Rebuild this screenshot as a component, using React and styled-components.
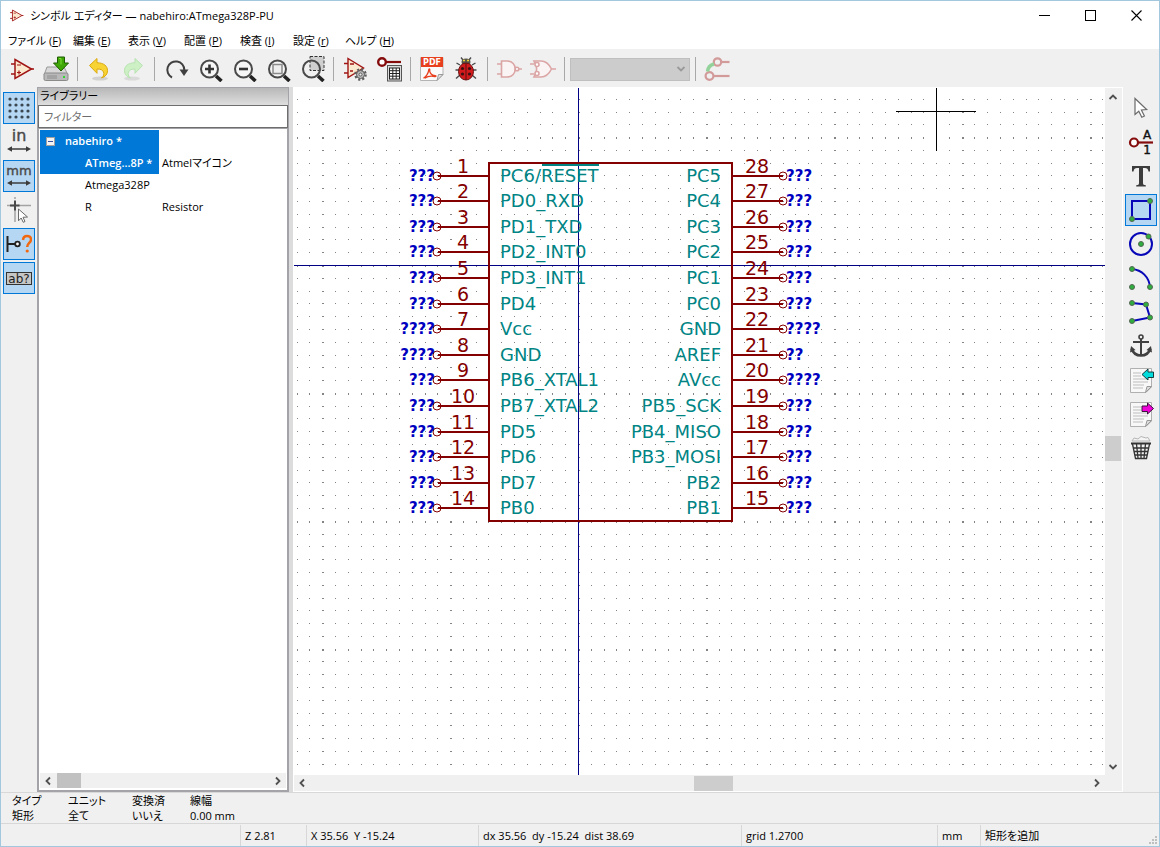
import React, { useState } from "react";
import styled, { createGlobalStyle, css } from "styled-components";

const MENUS = [
  ["ファイル", "F"],
  ["編集", "E"],
  ["表示", "V"],
  ["配置", "P"],
  ["検査", "I"],
  ["設定", "r"],
  ["ヘルプ", "H"],
];

const LEFT_PINS = [
  ["1", "PC6/RESET", "???"],
  ["2", "PD0_RXD", "???"],
  ["3", "PD1_TXD", "???"],
  ["4", "PD2_INT0", "???"],
  ["5", "PD3_INT1", "???"],
  ["6", "PD4", "???"],
  ["7", "Vcc", "????"],
  ["8", "GND", "????"],
  ["9", "PB6_XTAL1", "???"],
  ["10", "PB7_XTAL2", "???"],
  ["11", "PD5", "???"],
  ["12", "PD6", "???"],
  ["13", "PD7", "???"],
  ["14", "PB0", "???"],
];

const RIGHT_PINS = [
  ["28", "PC5", "???"],
  ["27", "PC4", "???"],
  ["26", "PC3", "???"],
  ["25", "PC2", "???"],
  ["24", "PC1", "???"],
  ["23", "PC0", "???"],
  ["22", "GND", "????"],
  ["21", "AREF", "??"],
  ["20", "AVcc", "????"],
  ["19", "PB5_SCK", "???"],
  ["18", "PB4_MISO", "???"],
  ["17", "PB3_MOSI", "???"],
  ["16", "PB2", "???"],
  ["15", "PB1", "???"],
];

const MESSAGES = [
  ["タイプ", "矩形"],
  ["ユニット", "全て"],
  ["変換済", "いいえ"],
  ["線幅", "0.00 mm"],
];

const STATUS = [
  "",
  "Z 2.81",
  "X 35.56  Y -15.24",
  "dx 35.56  dy -15.24  dist 38.69",
  "grid 1.2700",
  "mm",
  "矩形を追加",
];

/* ---------- icons ---------- */

const Icon = ({ children, size = 26 }) => (
  <svg width={size} height={size} viewBox="0 0 26 26" fill="none" aria-hidden="true">
    {children}
  </svg>
);

const OpAmp = ({ size }) => (
  <Icon size={size}>
    <path d="M2 8h4M2 18h4M22 13h3" stroke="#a01414" strokeWidth="1.6" />
    <path d="M6 3.500 22.500 13 6 22.500z" fill="#fbe9cf" stroke="#a01414" strokeWidth="1.5" />
    <path d="M8 9h4M8 16.500h4M10 14.500v4" stroke="#a01414" strokeWidth="1.200" />
  </Icon>
);

const SaveLibrary = () => (
  <Icon>
    <path d="M4 11h17l4 8H1z" fill="#d8d8d8" stroke="#9a9a9a" />
    <rect x="1" y="17" width="24" height="7.500" rx="1.500" fill="#b9b9b9" stroke="#8a8a8a" />
    <path d="M4 20h10M4 22h10" stroke="#8e8e8e" />
    <rect x="20" y="20" width="2" height="2" fill="#36d636" />
    <path d="M14.500 1h7v6h4L18 15 10.500 7h4z" fill="#3fa806" stroke="#1f5c00" />
    <path d="M16 2.500h2v6" stroke="#7edc38" />
  </Icon>
);

const UndoShape = ({ fill, line }) => (
  <>
    <ellipse cx="14" cy="22.500" rx="8" ry="2" fill="#000" opacity=".12" />
    <path
      d="M3.500 9.500 11 2.500v4.200c7 .3 10.500 3.300 10.500 8 0 3.500-2 6-6 7.300 2.300-2 2.800-4 2-6-.9-2.200-3-3-6.500-3v4.300z"
      fill={fill}
      stroke={line}
    />
  </>
);

const Undo = () => (
  <Icon>
    <UndoShape fill="#f8d334" line="#dba90e" />
  </Icon>
);

const Redo = () => (
  <Icon>
    <g transform="translate(26 0) scale(-1 1)" opacity=".7">
      <UndoShape fill="#bff0b4" line="#a0dd96" />
    </g>
  </Icon>
);

const Rotate = () => (
  <Icon>
    <path d="M9 21.500A8.500 8.500 0 1 1 21.300 14" stroke="#404040" strokeWidth="2" />
    <path d="M16.500 13.500h9L21 20z" fill="#404040" />
  </Icon>
);

const Lens = ({ children }) => (
  <>
    <circle cx="12.500" cy="13" r="8.500" fill="#f6f6f6" stroke="#4a4a4a" strokeWidth="2" />
    <path d="m19 20 5.500 5" stroke="#222" strokeWidth="3.600" />
    {children}
  </>
);

const ZoomIn = () => (
  <Icon>
    <Lens>
      <path d="M8 13h9M12.500 8.500v9" stroke="#333" strokeWidth="2.600" />
    </Lens>
  </Icon>
);

const ZoomOut = () => (
  <Icon>
    <Lens>
      <path d="M8 13h9" stroke="#333" strokeWidth="2.600" />
    </Lens>
  </Icon>
);

const ZoomFit = () => (
  <Icon>
    <Lens>
      <rect x="8" y="8.500" width="9" height="9" fill="#eee" stroke="#8a8a8a" strokeWidth="1.500" />
    </Lens>
  </Icon>
);

const ZoomSelection = () => (
  <Icon>
    <rect x="11" y="0.500" width="14" height="14" fill="#cfcfcf" stroke="#333" strokeDasharray="3 1.500" />
    <circle cx="12.500" cy="13" r="8.500" stroke="#4a4a4a" strokeWidth="2" />
    <path d="m19 20 5.500 5" stroke="#222" strokeWidth="3.600" />
  </Icon>
);

const SymbolProps = () => (
  <Icon>
    <path d="M2 7.500h4M2 17h4" stroke="#a01414" strokeWidth="1.600" />
    <path d="M6 2.500 21.500 12 6 21.500z" fill="#fbe9cf" stroke="#a01414" strokeWidth="1.400" />
    <path d="M8 8h4M8 15h3" stroke="#a01414" strokeWidth="1.300" />
    <circle cx="18.500" cy="18.500" r="5" stroke="#5e5e5e" strokeWidth="2.600" strokeDasharray="2 1.930" />
    <circle cx="18.500" cy="18.500" r="4" fill="#b8b8b8" stroke="#5e5e5e" />
    <circle cx="18.500" cy="18.500" r="1.500" fill="#eee" stroke="#5e5e5e" />
  </Icon>
);

const PinTable = () => (
  <Icon>
    <circle cx="6" cy="6" r="3.800" fill="#fff" stroke="#850c0c" strokeWidth="2.400" />
    <path d="M10 6h15" stroke="#850c0c" strokeWidth="2.200" />
    <rect x="11.500" y="9.500" width="14" height="15.500" fill="#ddd" stroke="#555" />
    <rect x="13.500" y="12" width="10" height="11" fill="#fff" stroke="#222" />
    <path d="M13.500 14.700h10M13.500 17.500h10M13.500 20.200h10M16.800 12v11M20.200 12v11" stroke="#222" />
  </Icon>
);

const PdfText = styled.text`
  font: bold 8px "DejaVu Sans", sans-serif;
  fill: #fff;
`;

const PdfSheet = () => (
  <Icon>
    <path d="M1.500 1.500h22.500v17l-6 6H1.500z" fill="#fafafa" stroke="#b4b4b4" />
    <path d="M24 18.500h-4.500L18 24.500z" fill="#e0e0e0" stroke="#999" />
    <rect x="2" y="1" width="22" height="10" fill="#e8401f" />
    <PdfText x="13" y="9" textAnchor="middle">
      PDF
    </PdfText>
    <path
      d="M4.500 22c2-.5 5-4.500 5.200-8 .1-1.500 1.300-1.300 1 0-.4 2.500 1.800 5.500 5.300 5.700 1.500.1 1.200 1-.3.800-3-.7-7-.3-10 1.600"
      stroke="#e8401f"
      strokeWidth="1.300"
    />
  </Icon>
);

const Bug = () => (
  <Icon>
    <path
      d="M7 9 3.500 7M6 14H2.500M7 19l-4 3.500M19 9l3.500-2M20 14h3.500M19 19l4 3.500M10 4 8 1.500M16 4l2-2.500"
      stroke="#4a4a4a"
      strokeWidth="1.400"
    />
    <ellipse cx="13" cy="6" rx="4.500" ry="3.500" fill="#55554a" />
    <path d="M10 4.500h2M14 4.500h2" stroke="#e8cf38" strokeWidth="1.500" />
    <ellipse cx="13" cy="15.500" rx="7.500" ry="8.500" fill="#d2191b" stroke="#6b1212" />
    <path d="M13 7v17" stroke="#581010" />
    <circle cx="9.500" cy="12.500" r="1.600" fill="#3a1212" />
    <circle cx="16.500" cy="12.500" r="1.600" fill="#3a1212" />
    <circle cx="9.500" cy="18" r="1.600" fill="#3a1212" />
    <circle cx="16.500" cy="18" r="1.600" fill="#3a1212" />
  </Icon>
);

const AndGate = () => (
  <Icon>
    <g stroke="#dba5a5" strokeWidth="1.600">
      <path d="M1 8h5M1 18h5M22 13h4" />
      <path d="M5.500 5H11c11 0 11 16 0 16H5.500z" fill="#fbf4f4" />
      <circle cx="21" cy="13" r="1.800" fill="#fff" />
    </g>
  </Icon>
);

const OrGate = () => (
  <Icon>
    <g stroke="#dba5a5" strokeWidth="1.600">
      <path d="M4 5h7c6 0 8.500 4 10.500 8-2 4-4.500 8-10.500 8H4c3.500-6 3.500-10 0-16z" fill="#fbf4f4" />
      <path d="M0 8h4M0 18h4M22 13h4" />
      <circle cx="7" cy="8.500" r="2" fill="#fff" />
      <circle cx="7" cy="17.500" r="2" fill="#fff" />
    </g>
  </Icon>
);

const SyncPins = () => (
  <Icon>
    <g stroke="#d39a9a" strokeWidth="2.200">
      <circle cx="13.500" cy="6" r="3.700" />
      <path d="M17.500 6h8" />
      <circle cx="5.500" cy="20" r="3.900" />
      <path d="M10 20h15.500" />
    </g>
    <path d="M3.500 15.500c.5-4 2.500-6.500 6.500-7.500" stroke="#93d39b" strokeWidth="3.500" />
  </Icon>
);

const Grid = () => (
  <Icon>
    {[4, 10, 16, 22].map((y) =>
      [4, 10, 16, 22].map((x) => <circle key={x + "-" + y} cx={x} cy={y} r="1.600" fill="#3a4650" />)
    )}
  </Icon>
);

const UnitText = styled.text`
  font: ${({ $size }) => $size}px "DejaVu Sans", sans-serif;
  fill: #4a4a4a;
  stroke: #4a4a4a;
  stroke-width: 0.4px;
`;

const Unit = ({ label, size }) => (
  <Icon>
    <UnitText x="13" y="12" textAnchor="middle" $size={size}>
      {label}
    </UnitText>
    <path d="M4 20h18" stroke="#3c3c3c" strokeWidth="1.500" />
    <path d="M1 20l5-2.800v5.600zM25 20l-5-2.800v5.600z" fill="#3c3c3c" />
  </Icon>
);

const CursorShape = () => (
  <Icon>
    <path d="M1 8.500h7M12 8.500h13M9 0v2M9 13v12" stroke="#a3a3a3" strokeWidth="1.500" />
    <path d="M4 8.500h9.500M9 3.500v10" stroke="#4a4a4a" strokeWidth="2" />
    <path d="m12.500 12 9 8-4.500.3 2 4.200-1.800.8-2-4.300-2.700 2.800z" fill="#fff" stroke="#6a6a6a" />
  </Icon>
);

const PinType = () => (
  <Icon>
    <path d="M1.500 5v16M2 13h7" stroke="#222" strokeWidth="2" />
    <circle cx="11.500" cy="13" r="2.300" fill="#fff" stroke="#222" strokeWidth="1.800" />
    <path
      d="M17 9c.3-2.700 1.800-4 4-4 2.500 0 4 1.400 4 3.500 0 3.500-3.800 3.500-3.800 7.500"
      stroke="#f2680f"
      strokeWidth="2.500"
    />
    <circle cx="21.200" cy="20" r="1.600" fill="#f2680f" />
  </Icon>
);

const AbText = styled.text`
  font: 12px "DejaVu Sans", sans-serif;
  fill: #222;
`;

const PinNameToggle = () => (
  <Icon>
    <rect x="0.500" y="7.500" width="25" height="12" fill="#c6c6c6" stroke="#333" />
    <AbText x="13" y="18" textAnchor="middle">
      ab?
    </AbText>
  </Icon>
);

const Arrow = () => (
  <Icon>
    <path d="M7 3.500v16l3.800-3.300 3 6 2.600-1.200-3-6 5.300-.5z" fill="#fff" stroke="#6a6a6a" strokeWidth="1.200" />
  </Icon>
);

const PinLabel = styled.text`
  font: 12px "DejaVu Sans", sans-serif;
  fill: #111;
  stroke: #111;
  stroke-width: 0.4px;
`;

const AddPin = () => (
  <Icon>
    <circle cx="6" cy="13.500" r="4" fill="#fff" stroke="#850c0c" strokeWidth="2.200" />
    <path d="M10 13.500h15" stroke="#850c0c" strokeWidth="2.200" />
    <PinLabel x="19" y="10" textAnchor="middle">
      A
    </PinLabel>
    <PinLabel x="19" y="25" textAnchor="middle">
      1
    </PinLabel>
  </Icon>
);

const TextTool = () => (
  <Icon>
    <path
      d="M4 3h18v5.500h-1.500C20 5.800 19 5 17 5h-2v15c0 1.700.7 2 2.800 2.200V23.500H8.200v-1.300c2.100-.2 2.800-.5 2.800-2.200V5H9C7 5 6 5.800 5.500 8.500H4z"
      fill="#3c3c3c"
    />
  </Icon>
);

const Node = ({ x, y }) => <circle cx={x} cy={y} r="2.500" fill="#2fae3f" stroke="#546654" />;

const RectTool = () => (
  <Icon>
    <rect x="4" y="4" width="18" height="18" stroke="#0808b8" strokeWidth="2" />
    <Node x="22" y="4" />
    <Node x="4" y="22" />
  </Icon>
);

const CircleTool = () => (
  <Icon>
    <circle cx="13" cy="13" r="11" stroke="#0808b8" strokeWidth="2" />
    <Node x="13" y="13" />
    <Node x="20.500" y="5.500" />
  </Icon>
);

const ArcTool = () => (
  <Icon>
    <path d="M4 4c10 1 17 8 18 18" stroke="#0808b8" strokeWidth="2" />
    <Node x="4" y="4" />
    <Node x="4" y="22" />
    <Node x="22" y="22" />
  </Icon>
);

const PolyTool = () => (
  <Icon>
    <path d="m4 4 14 1.500 4 13L4 22" stroke="#0808b8" strokeWidth="2" />
    <Node x="4" y="4" />
    <Node x="18" y="5.500" />
    <Node x="22" y="18.500" />
    <Node x="4" y="22" />
  </Icon>
);

const AnchorTool = () => (
  <Icon>
    <circle cx="13" cy="4" r="2" stroke="#404040" strokeWidth="1.600" />
    <path d="M13 6v17M5 9h16" stroke="#404040" strokeWidth="2" />
    <path d="M3.500 15.500c1.500 4.500 5 7 9.500 7s8-2.500 9.500-7" stroke="#404040" strokeWidth="2.600" />
    <path d="M2 19.500 3 13l4.500 4zM24 19.500 23 13l-4.500 4z" fill="#404040" />
  </Icon>
);

const Sheet = ({ children }) => (
  <Icon>
    <path d="M2.500 1.500h21V20l-5.500 5.500H2.500z" fill="#f8f8f8" stroke="#b0b0b0" />
    <path d="M23.500 19.500H19l-1.500 6z" fill="#ddd" stroke="#999" />
    <path d="M5 6h8M5 9h8M5 12h15M5 15h15M5 18h11M5 21h10" stroke="#bdbdbd" />
    {children}
  </Icon>
);

const ImportSheet = () => (
  <Sheet>
    <path d="M14 7.500 20 2v3h5.500v5.500H20V13z" fill="#00dcdc" stroke="#143c3c" />
  </Sheet>
);

const ExportSheet = () => (
  <Sheet>
    <path d="M25.500 7.500 19.500 2v3H14v5.500h5.500V13z" fill="#f000d8" stroke="#3c143c" />
  </Sheet>
);

const Trash = () => (
  <Icon>
    <path d="m4 6 2-3 4 1 3-2.500L18 3l2-.5L22 6z" fill="#f5f5f5" stroke="#b5b5b5" />
    <path d="M3 8.500h20" stroke="#333" strokeWidth="2" />
    <path
      d="m4.500 9 3 14.500h11L21.500 9M8.500 9l1.500 14M13 9v14M17.500 9 16 23M5.500 13h15M6 16.500h14M7 20h12"
      stroke="#333"
      strokeWidth="1.300"
    />
  </Icon>
);

const Chevron = ({ dir }) => {
  const d = {
    up: "M1.500 7 5 3.500 8.500 7",
    down: "M1.500 3 5 6.500 8.500 3",
    left: "M7 1.500 3.500 5 7 8.500",
    right: "M3 1.500 6.500 5 3 8.500",
  }[dir];
  return (
    <svg width="10" height="10" viewBox="0 0 10 10" fill="none" aria-hidden="true">
      <path d={d} stroke="#505050" strokeWidth="1.800" />
    </svg>
  );
};

const TOOLS = [
  [["エディター", OpAmp], ["保存", SaveLibrary]],
  [["元に戻す", Undo], ["やり直し", Redo, true]],
  [
    ["再描画", Rotate],
    ["ズームイン", ZoomIn],
    ["ズームアウト", ZoomOut],
    ["画面に合わせる", ZoomFit],
    ["選択範囲をズーム", ZoomSelection],
  ],
  [["プロパティ", SymbolProps], ["ピンテーブル", PinTable]],
  [["データシート", PdfSheet], ["チェック", Bug]],
  [["標準", AndGate, true], ["代替", OrGate, true]],
];

const LEFT_TOOLS = [
  ["グリッド", Grid, true],
  ["インチ", () => <Unit label="in" size={16} />, false],
  ["ミリ", () => <Unit label="mm" size={13} />, true],
  ["カーソル", CursorShape, false],
  ["ピンタイプ", PinType, true],
  ["ピン名", PinNameToggle, true],
];

const RIGHT_TOOLS = [
  ["選択", Arrow],
  ["ピン", AddPin],
  ["テキスト", TextTool],
  ["矩形", RectTool],
  ["円", CircleTool],
  ["円弧", ArcTool],
  ["ポリゴン", PolyTool],
  ["アンカー", AnchorTool],
  ["インポート", ImportSheet],
  ["エクスポート", ExportSheet],
  ["削除", Trash],
];

/* ---------- drawing sheet ---------- */

const ORIGIN_X = 284;
const ORIGIN_Y = 177;
const PITCH = 12.79;

const gridDots = () => {
  const dots = [];
  for (let j = -14; j < 60; j++) {
    for (let i = -23; i < 140; i++) {
      const x = Math.round(ORIGIN_X + i * PITCH);
      const y = Math.round(ORIGIN_Y + j * PITCH);
      const w = i % 10 === 0 ? 2 : 1;
      const h = j % 10 === 0 ? 2 : 1;
      dots.push(`M${x} ${y}h${w}v${h}h-${w}z`);
    }
  }
  return dots.join("");
};

const DOTS = gridDots();
const pinY = (i) => Math.floor(88.2 + i * PITCH * 2);

const Sheet2D = () => (
  <Drawing role="img" aria-label="ATmega328P-PU">
    <path d={DOTS} fill="#848484" />
    <g fill="#000084">
      <rect x={ORIGIN_X} y="0" width="1" height="100%" />
      <rect x="0" y={ORIGIN_Y} width="100%" height="1" />
    </g>
    <rect x="195" y="75" width="243" height="358" fill="none" stroke="#840000" strokeWidth="2" />
    <rect x="248" y="76" width="57" height="2" fill="#008484" />
    {LEFT_PINS.map(([num, name, type], i) => (
      <g key={num}>
        <path d={`M144 ${pinY(i)}h51`} stroke="#840000" strokeWidth="2" />
        <circle cx="143" cy={pinY(i)} r="4" fill="none" stroke="#840000" />
        <PinNumber x="169" y={pinY(i) - 3}>
          {num}
        </PinNumber>
        <PinName x="206" y={pinY(i) + 6}>
          {name}
        </PinName>
        <PinKind x="141" y={pinY(i) + 5} $end>
          {type}
        </PinKind>
      </g>
    ))}
    {RIGHT_PINS.map(([num, name, type], i) => (
      <g key={num}>
        <path d={`M438 ${pinY(i)}h51`} stroke="#840000" strokeWidth="2" />
        <circle cx="489" cy={pinY(i)} r="4" fill="none" stroke="#840000" />
        <PinNumber x="463" y={pinY(i) - 3}>
          {num}
        </PinNumber>
        <PinName x="427" y={pinY(i) + 6} $end>
          {name}
        </PinName>
        <PinKind x="492" y={pinY(i) + 5}>
          {type}
        </PinKind>
      </g>
    ))}
    <path d="M602 23.500h80M642.500 0v63" stroke="#000" />
  </Drawing>
);

const App = () => {
  const [filter, setFilter] = useState("");
  const [tool, setTool] = useState("矩形");

  return (
    <Window>
      <GlobalStyle />
      <TitleBar>
        <OpAmp size={15} />
        <h1>シンボル エディター — nabehiro:ATmega328P-PU</h1>
        <Caption aria-label="最小化">
          <svg width="11" height="11" aria-hidden="true">
            <path d="M0 5.500h11" stroke="#000" />
          </svg>
        </Caption>
        <Caption aria-label="最大化">
          <svg width="11" height="11" aria-hidden="true">
            <rect x="0.500" y="0.500" width="10" height="10" fill="none" stroke="#000" />
          </svg>
        </Caption>
        <Caption aria-label="閉じる">
          <svg width="11" height="11" aria-hidden="true">
            <path d="m.5.500 10 10m0-10-10 10" stroke="#000" strokeWidth="1.100" />
          </svg>
        </Caption>
      </TitleBar>

      <MenuBar>
        {MENUS.map(([label, key]) => (
          <button key={key}>
            {label} (<u>{key}</u>)
          </button>
        ))}
      </MenuBar>

      <TopToolbar>
        {TOOLS.map((group, i) => (
          <React.Fragment key={i}>
            {group.map(([label, Glyph, off]) => (
              <ToolButton key={label} aria-label={label} disabled={off}>
                <Glyph />
              </ToolButton>
            ))}
            <Separator />
          </React.Fragment>
        ))}
        <UnitSelect>
          <select disabled aria-label="ユニット" />
          <Chevron dir="down" />
        </UnitSelect>
        <Separator />
        <ToolButton aria-label="ピン同期" disabled>
          <SyncPins />
        </ToolButton>
      </TopToolbar>

      <Main>
        <SideBar>
          {LEFT_TOOLS.map(([label, Glyph, on]) => (
            <SideButton key={label} aria-label={label} $on={on}>
              <Glyph />
            </SideButton>
          ))}
        </SideBar>

        <Library>
          <h2>ライブラリー</h2>
          <input
            aria-label="フィルター"
            placeholder="フィルター"
            value={filter}
            onChange={(e) => setFilter(e.target.value)}
          />
          <Tree>
            <TreeRow>
              <TreeCell $selected $bold>
                <Expander />
                nabehiro *
              </TreeCell>
            </TreeRow>
            <TreeRow>
              <TreeCell $selected $bold $child>
                ATmeg...8P *
              </TreeCell>
              <span>Atmelマイコン</span>
            </TreeRow>
            <TreeRow>
              <TreeCell $child>Atmega328P</TreeCell>
            </TreeRow>
            <TreeRow>
              <TreeCell $child>R</TreeCell>
              <span>Resistor</span>
            </TreeRow>
            <TreeScroll>
              <Chevron dir="left" />
              <HTrack>
                <Thumb $before={0} $after={188} $size={24} $dark />
              </HTrack>
              <Chevron dir="right" />
            </TreeScroll>
          </Tree>
        </Library>

        <Sash />

        <CanvasFrame>
          <Sheet2D />
          <VScroll>
            <Chevron dir="up" />
            <VTrack>
              <Thumb $vertical $before={332} $after={298} $size={25} />
            </VTrack>
            <Chevron dir="down" />
          </VScroll>
          <HScroll>
            <Chevron dir="left" />
            <HTrack>
              <Thumb $before={383} $after={355} $size={40} />
            </HTrack>
            <Chevron dir="right" />
          </HScroll>
        </CanvasFrame>

        <SideBar>
          {RIGHT_TOOLS.map(([label, Glyph]) => (
            <SideButton key={label} aria-label={label} $on={tool === label} onClick={() => setTool(label)}>
              <Glyph />
            </SideButton>
          ))}
        </SideBar>
      </Main>

      <MessagePanel>
        {MESSAGES.map(([top, bottom]) => (
          <div key={top}>
            <div>{top}</div>
            <div>{bottom}</div>
          </div>
        ))}
      </MessagePanel>

      <StatusBar>
        {STATUS.map((text, i) => (
          <span key={i}>{text}</span>
        ))}
        <svg width="9" height="9" viewBox="0 0 9 9" aria-hidden="true">
          <path d="M6 0h2v2H6zM3 3h2v2H3zM6 3h2v2H6zM0 6h2v2H0zM3 6h2v2H3zM6 6h2v2H6z" fill="#bfbfbf" />
        </svg>
      </StatusBar>
    </Window>
  );
};

const GlobalStyle = createGlobalStyle`
  * {
    box-sizing: border-box;
  }
  body {
    margin: 0;
  }
  button, input, select {
    font: inherit;
    color: inherit;
  }
`;

const Window = styled.div`
  height: 100vh;
  display: flex;
  flex-direction: column;
  border: 1px solid #a3c8de;
  background: #f0f0f0;
  color: #000;
  font: 11px/16px "Open Sans", "Noto Sans CJK JP", sans-serif;
  font-feature-settings: "palt";
`;

const TitleBar = styled.header`
  height: 29px;
  flex: none;
  display: flex;
  align-items: center;
  background: #fff;
  padding-left: 8px;
  h1 {
    flex: 1;
    margin: 0 0 0 6px;
    font-size: 11px;
    font-weight: 400;
    white-space: nowrap;
  }
`;

const Caption = styled.button`
  width: 46px;
  height: 29px;
  padding: 0;
  border: 0;
  background: none;
  display: grid;
  place-items: center;
`;

const MenuBar = styled.nav`
  height: 19px;
  flex: none;
  background: #fff;
  padding: 2px 0 0 7px;
  display: grid;
  grid-template-columns: 65px 55px 56px 56px 53px 52px 1fr;
  button {
    padding: 0;
    border: 0;
    background: none;
    text-align: left;
    white-space: nowrap;
  }
`;

const TopToolbar = styled.div`
  height: 38px;
  flex: none;
  display: flex;
  align-items: center;
  padding: 2px 4px 0;
`;

const ToolButton = styled.button`
  width: 34px;
  height: 34px;
  flex: none;
  padding: 0;
  border: 0;
  background: none;
  display: grid;
  place-items: center;
`;

const Separator = styled.span`
  width: 1px;
  height: 24px;
  margin: 0 4px;
  background: #a8a8a8;
`;

const UnitSelect = styled.span`
  width: 120px;
  height: 23px;
  margin: 0 1px;
  display: flex;
  align-items: center;
  background: #ccc;
  border: 1px solid #bfbfbf;
  padding-right: 3px;
  select {
    flex: 1;
    height: 21px;
    appearance: none;
    border: 0;
    background: none;
  }
  svg {
    opacity: 0.4;
  }
`;

const Main = styled.main`
  flex: 1;
  min-height: 0;
  display: flex;
`;

const SideBar = styled.div`
  width: 36px;
  flex: none;
  display: flex;
  flex-direction: column;
  align-items: center;
  gap: 2px;
  padding-top: 5px;
`;

const SideButton = styled(ToolButton)`
  width: 32px;
  height: 32px;
  border: 1px solid transparent;
  ${({ $on }) =>
    $on &&
    css`
      background: #b5d7f3;
      border-color: #0078d7;
    `}
`;

const Library = styled.section`
  width: 252px;
  flex: none;
  display: flex;
  flex-direction: column;
  border: 1px solid #a3a3a8;
  h2 {
    height: 17px;
    margin: 0;
    padding-left: 2px;
    font-size: 11px;
    line-height: 15px;
    font-weight: 400;
    background: linear-gradient(#b8b8b8, #dedede);
  }
  input {
    height: 23px;
    padding: 0 5px;
    border: 1px solid #6e6e6e;
    background: #fff;
    border-radius: 0;
    outline: 0;
  }
  input::placeholder {
    color: #6d6d6d;
  }
`;

const Tree = styled.div`
  flex: 1;
  display: flex;
  flex-direction: column;
  border: 1px solid #a3a3a8;
  background: #fff;
  padding: 1px 1px 2px;
`;

const TreeRow = styled.div`
  height: 22px;
  display: grid;
  grid-template-columns: 119px 1fr;
  line-height: 22px;
  white-space: nowrap;
  > span {
    padding-left: 3px;
  }
`;

const TreeCell = styled.div`
  display: flex;
  align-items: center;
  padding-left: ${({ $child }) => ($child ? 45 : 6)}px;
  font-weight: ${({ $bold }) => ($bold ? 600 : 400)};
  ${({ $selected }) =>
    $selected &&
    css`
      background: #0078d7;
      color: #fff;
    `}
`;

const Expander = styled.i`
  width: 9px;
  height: 9px;
  margin-right: 10px;
  border: 1px solid #a0a0a0;
  background: linear-gradient(#3c50a0, #3c50a0) center / 5px 1px no-repeat #f4f4f4;
`;

const TreeScroll = styled.div`
  height: 15px;
  margin-top: auto;
  display: flex;
  align-items: center;
  gap: 4px;
  padding: 0 3px;
  background: #f0f0f0;
`;

const Sash = styled.div`
  width: 4px;
  flex: none;
  background: #dcdcdc;
`;

const CanvasFrame = styled.section`
  flex: 1;
  min-width: 0;
  display: grid;
  grid-template-columns: minmax(0, 1fr) 17px;
  grid-template-rows: minmax(0, 1fr) 16px;
  border: 1px solid #fff;
`;

const Drawing = styled.svg`
  width: 100%;
  height: 100%;
  display: block;
  overflow: hidden;
  background: #fff;
`;

const PinNumber = styled.text`
  font: 19px "DejaVu Sans", sans-serif;
  fill: #840000;
  text-anchor: middle;
`;

const PinName = styled.text`
  font: 18px "DejaVu Sans", sans-serif;
  fill: #008484;
  text-anchor: ${({ $end }) => ($end ? "end" : "start")};
`;

const PinKind = styled.text`
  font: bold 15px "DejaVu Sans", sans-serif;
  fill: #0000c0;
  text-anchor: ${({ $end }) => ($end ? "end" : "start")};
`;

const VScroll = styled.div`
  display: flex;
  flex-direction: column;
  align-items: center;
  gap: 3px;
  padding: 4px 1px 3px 0;
  background: #f0f0f0;
`;

const HScroll = styled.div`
  grid-column: 1 / -1;
  display: flex;
  align-items: center;
  gap: 4px;
  padding: 0 20px 0 3px;
  background: #f0f0f0;
`;

const VTrack = styled.div`
  flex: 1;
  width: 100%;
  display: flex;
  flex-direction: column;
`;

const HTrack = styled.div`
  flex: 1;
  height: 15px;
  display: flex;
`;

/* $before, $size and $after are shares of the track length */
const Thumb = styled.div`
  flex: 1;
  display: flex;
  flex-direction: ${({ $vertical }) => ($vertical ? "column" : "row")};
  background: linear-gradient(
    ${({ $vertical }) => ($vertical ? "to bottom" : "to right")},
    transparent ${({ $before, $after, $size }) => ($before / ($before + $after + $size)) * 100}%,
    ${({ $dark }) => ($dark ? "#c1c1c1" : "#cdcdcd")} 0
      ${({ $before, $after, $size }) => (($before + $size) / ($before + $after + $size)) * 100}%,
    transparent 0
  );
`;

const MessagePanel = styled.div`
  height: 32px;
  flex: none;
  padding-left: 11px;
  display: grid;
  grid-template-columns: 56px 64px 58px 1fr;
  line-height: 15px;
  border-top: 1px solid #d8d8d8;
  border-bottom: 1px solid #d7d7d7;
`;

const StatusBar = styled.footer`
  height: 22px;
  flex: none;
  position: relative;
  display: grid;
  grid-template-columns: 239fr 66fr 172fr 263fr 196fr 43fr 179fr;
  padding-top: 1px;
  line-height: 21px;
  white-space: pre;
  overflow: hidden;
  span + span {
    padding-left: 4px;
    border-left: 1px solid #d7d7d7;
  }
  svg {
    position: absolute;
    right: 1px;
    bottom: 1px;
  }
`;

export default App;
